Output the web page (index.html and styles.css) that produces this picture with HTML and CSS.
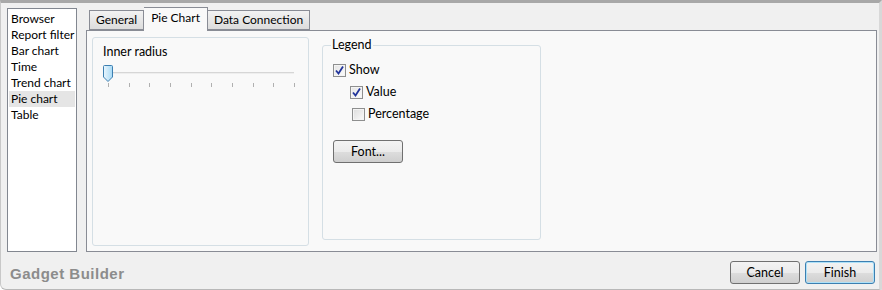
FILE: index.html
```html
<!DOCTYPE html>
<html>
<head>
<meta charset="utf-8">
<link rel="stylesheet" href="styles.css">
</head>
<body>
<div class="frame">
  <div class="main">
    <ul class="list">
      <li>Browser</li>
      <li>Report filter</li>
      <li>Bar chart</li>
      <li>Time</li>
      <li>Trend chart</li>
      <li class="sel">Pie chart</li>
      <li>Table</li>
    </ul>
    <div class="tabctl">
      <div class="tabstrip">
        <div class="tab">General</div>
        <div class="tab active">Pie Chart</div>
        <div class="tab">Data Connection</div>
      </div>
      <div class="panel">
        <div class="group">
          <div class="label">Inner radius</div>
          <div class="slider">
            <div class="track"></div>
            <svg class="thumb" width="10" height="17" viewBox="0 0 10 17">
              <defs>
                <linearGradient id="tg" x1="0" y1="0" x2="1" y2="0">
                  <stop offset="0" stop-color="#eaf6fd"/>
                  <stop offset="1" stop-color="#a7d9f5"/>
                </linearGradient>
              </defs>
              <path d="M1.5 0.5 H8.5 Q9.5 0.5 9.5 1.5 V12 L5 16.5 L0.5 12 V1.5 Q0.5 0.5 1.5 0.5 Z" fill="url(#tg)" stroke="#3c7fb1"/>
            </svg>
            <div class="ticks">
              <i></i><i></i><i></i><i></i><i></i><i></i><i></i><i></i><i></i><i></i>
            </div>
          </div>
        </div>
        <fieldset class="legendbox">
          <legend>Legend</legend>
          <label class="check lvl0"><span class="box on"><svg width="9" height="9" viewBox="0 0 9 9"><path d="M1 4.5 L3.5 7.5 L8 0.5" fill="none" stroke="#21349b" stroke-width="1.8"/></svg></span>Show</label>
          <label class="check lvl1"><span class="box on"><svg width="9" height="9" viewBox="0 0 9 9"><path d="M1 4.5 L3.5 7.5 L8 0.5" fill="none" stroke="#21349b" stroke-width="1.8"/></svg></span>Value</label>
          <label class="check lvl2"><span class="box"></span>Percentage</label>
          <button class="btn fontbtn">Font...</button>
        </fieldset>
      </div>
    </div>
  </div>
  <div class="footer">
    <div class="title">Gadget Builder</div>
    <div class="actions">
      <button class="btn">Cancel</button>
      <button class="btn default">Finish</button>
    </div>
  </div>
</div>
</body>
</html>
```
FILE: styles.css
```css
* { box-sizing: border-box; }
html, body { margin: 0; padding: 0; }
body {
  width: 882px;
  height: 290px;
  background: #ffffff;
  font-family: Lato, "Noto Sans", sans-serif;
  font-size: 12.5px;
  color: #000;
  overflow: hidden;
}
.frame {
  width: 882px;
  height: 290px;
  background: #f0f0f0;
  border-top: 3px solid #a8a8a8;
  border-right: 3px solid #d8d8d8;
  border-left: 1px solid #c8c8c8;
  border-bottom: 1px solid #b8b8b8;
  border-bottom-left-radius: 6px;
  display: flex;
  flex-direction: column;
}
.main {
  display: flex;
  padding: 5px 2px 0 6px;
  gap: 9px;
  height: 249px;
}
.list {
  list-style: none;
  margin: 0;
  padding: 2px 1px;
  width: 70px;
  height: 244px;
  background: #fff;
  border: 1px solid #828790;
  flex: none;
  font-size: 12px;
}
.list li {
  height: 16px;
  line-height: 16px;
  padding-left: 2px;
  white-space: nowrap;
  overflow: hidden;
}
.list li.sel { background: #e5e5e5; }
.tabctl {
  flex: 1;
  display: flex;
  flex-direction: column;
}
.tabstrip {
  display: flex;
  align-items: flex-end;
  padding-left: 3px;
  height: 23px;
  margin-bottom: -1px;
  position: relative;
  z-index: 1;
  font-size: 12px;
}
.tab {
  height: 20px;
  line-height: 18px;
  padding: 0 6px;
  border: 1px solid #898c95;
  background: linear-gradient(#f2f2f2, #dcdcdc);
  margin-bottom: 1px;
}
.tab.active {
  height: 24px;
  line-height: 20px;
  padding: 0 7px;
  background: #f9f9f9;
  border-bottom: none;
  border-left: none;
  position: relative;
  z-index: 2;
  margin-bottom: 0;
}
.tab.active + .tab { border-left: none; }
.panel {
  flex: 1;
  border: 1px solid #898c95;
  background: #f9f9f9;
  display: flex;
  align-items: flex-start;
  padding: 6px 5px 4px 5px;
  gap: 13px;
}
.group {
  width: 217px;
  height: 209px;
  border: 1px solid #d5dfe5;
  border-radius: 3px;
  padding: 6px 10px;
}
.label { line-height: 16px; }
.slider {
  position: relative;
  height: 30px;
  margin-top: 4px;
}
.track {
  position: absolute;
  left: 3px;
  right: 4px;
  top: 8px;
  height: 2px;
  background: #d6d6d6;
  border-bottom: 1px solid #eeeeee;
}
.thumb {
  position: absolute;
  left: 0;
  top: 1px;
}
.ticks {
  position: absolute;
  left: 5px;
  right: 3px;
  top: 19px;
  display: flex;
  justify-content: space-between;
}
.ticks i {
  display: block;
  width: 1px;
  height: 4px;
  background: #b0b0b0;
}
.legendbox {
  width: 219px;
  height: 203px;
  margin: 0;
  padding: 8px 10px 4px;
  border: 1px solid #d5dfe5;
  border-radius: 3px;
  display: flex;
  flex-direction: column;
  align-items: flex-start;
}
.legendbox legend {
  padding: 0 1px;
  margin-left: -2px;
  line-height: 16px;
}
.check {
  display: flex;
  align-items: center;
  gap: 3px;
  height: 16px;
  line-height: 16px;
}
.check.lvl0 { margin-top: 1px; }
.check.lvl1 { margin-left: 17px; margin-top: 6px; }
.check.lvl2 { margin-left: 19px; margin-top: 6px; }
.box {
  width: 13px;
  height: 13px;
  border: 1px solid #8e8f8f;
  background: linear-gradient(135deg, #dcdcdc, #fbfbfb);
  box-shadow: inset 0 0 0 1px #f4f4f4;
  display: flex;
  align-items: center;
  justify-content: center;
}
.box.on { background: linear-gradient(135deg, #e4e4e4, #fcfcfc); }
.btn {
  font-family: inherit;
  font-size: 12.5px;
  color: #000;
  width: 70px;
  height: 23px;
  padding: 0;
  border: 1px solid #707070;
  border-radius: 3px;
  background: linear-gradient(#f3f3f3 0%, #ebebeb 50%, #dddddd 51%, #cfcfcf 100%);
}
.fontbtn { margin-top: 18px; }
.footer {
  flex: 1;
  display: flex;
  align-items: center;
  justify-content: space-between;
  padding: 0 4px 1px 9px;
}
.title {
  font-family: "Liberation Sans", Arial, sans-serif;
  font-weight: bold;
  font-size: 15px;
  letter-spacing: 0.5px;
  color: #8c8c8c;
  padding-top: 6px;
}
.actions {
  display: flex;
  gap: 5px;
  padding-top: 4px;
}
.btn.default {
  border-color: #3c7fb1;
  box-shadow: inset 0 0 0 1px #aee1f8;
}
```
